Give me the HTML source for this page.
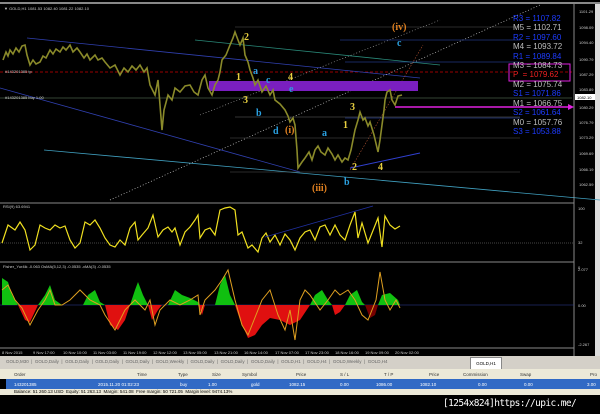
<!DOCTYPE html>
<html><head><meta charset="utf-8"><style>
body{margin:0;width:600px;height:414px;background:#000;overflow:hidden;font-family:"Liberation Sans",sans-serif;position:relative}
.a{position:absolute}
.t{font-size:4px;color:#ccc;position:absolute;white-space:nowrap}
.pv{position:absolute;left:513px;font-size:8px;white-space:nowrap}
.b{color:#1e3cff}.g{color:#bdbdbd}
.tab{position:absolute;top:359px;font-size:4.5px;color:#666;white-space:nowrap}
.h{position:absolute;top:372px;font-size:4.5px;color:#333}
.r{position:absolute;top:382px;font-size:4.5px;color:#fff}
</style></head><body>
<div class="a" style="left:0;top:2px;width:600px;height:2px;background:#888"></div>
<div class="a" style="left:595px;top:4px;width:5px;height:352px;background:#ddd"></div>
<div class="t" style="left:4px;top:6px">▼ GOLD,H1 1081.53 1082.40 1081.22 1082.10</div>
<svg class="a" style="left:0;top:0" width="600" height="414">
<line x1="0" y1="72" x2="572" y2="72" stroke="#c00" stroke-dasharray="3,2" stroke-width="0.8"/>
<line x1="0" y1="98" x2="572" y2="98" stroke="#6a8a6a" stroke-width="0.6"/>
<line x1="27" y1="38" x2="420" y2="78" stroke="#3040b0" stroke-width="0.8"/>
<line x1="0" y1="88" x2="300" y2="172" stroke="#3040b0" stroke-width="0.8"/>
<line x1="44" y1="150" x2="600" y2="200" stroke="#40a0c0" stroke-width="0.8"/>
<line x1="195" y1="40" x2="440" y2="65" stroke="#2a8a7a" stroke-width="0.8"/>
<line x1="110" y1="200" x2="540" y2="5" stroke="#ccc" stroke-dasharray="1,2" stroke-width="0.7"/>
<line x1="200" y1="115" x2="440" y2="20" stroke="#b0b0b0" stroke-dasharray="1,2" stroke-width="0.6"/>
<line x1="350" y1="170" x2="423" y2="45" stroke="#b05030" stroke-dasharray="1.5,1.5" stroke-width="0.6"/>
<line x1="340" y1="40" x2="520" y2="40" stroke="#3050c0" stroke-width="0.6"/>
<line x1="345" y1="62" x2="520" y2="62" stroke="#3050c0" stroke-width="0.6"/>
<line x1="345" y1="118" x2="520" y2="118" stroke="#3050c0" stroke-width="0.6"/>
<line x1="235" y1="117" x2="520" y2="117" stroke="#666" stroke-width="0.5"/>
<line x1="230" y1="138" x2="520" y2="138" stroke="#555" stroke-width="0.5"/>
<line x1="230" y1="172" x2="520" y2="172" stroke="#555" stroke-width="0.5"/>
<line x1="235" y1="27" x2="520" y2="27" stroke="#555" stroke-width="0.5"/>
<line x1="350" y1="168" x2="420" y2="153" stroke="#3040d0" stroke-width="1"/>
<rect x="209" y="81" width="209" height="10" fill="#7a1fc0"/>
<line x1="395" y1="107" x2="568" y2="107" stroke="#e020e0" stroke-width="1.5"/>
<polygon points="568,104 574,107 568,110" fill="#e020e0"/>
<polyline fill="none" stroke="#8a8a2a" stroke-width="1.6" stroke-linejoin="miter" points="3,60 6,52 8,56 10,50 13,54 16,48 19,52 22,46 25,45 27,55 30,65 33,60 36,64 40,62 43,56 46,58 50,50 53,54 56,49 60,52 63,47 66,50 70,45 73,52 77,48 80,52 84,58 87,54 90,60 95,55 98,60 102,58 105,62 110,68 115,65 120,75 124,68 128,72 132,66 136,70 140,65 144,72 147,68 150,85 155,95 158,80 162,130 164,110 168,95 172,100 175,88 180,92 185,86 190,85 194,92 198,95 202,80 205,75 208,88 212,95 215,85 218,80 220,72 222,60 226,55 230,45 233,38 235,32 238,40 240,45 243,38 245,55 248,62 250,70 253,78 255,85 258,80 262,92 266,86 270,95 273,90 275,100 280,104 285,110 288,116 290,122 293,118 295,125 297,150 298,168 302,162 305,158 309,152 312,160 315,150 318,146 321,152 325,155 328,148 332,154 335,160 338,155 342,162 345,158 348,160 351,150 355,130 358,120 360,112 363,120 365,118 368,126 370,122 374,135 378,152 380,140 382,125 384,110 385,100 387,92 390,90 392,100 395,105 398,96 402,95"/>
<g font-size="4" fill="#ccc">
<text x="579" y="13">1101.29</text><text x="579" y="29">1098.09</text><text x="579" y="44">1094.40</text><text x="579" y="61">1090.79</text><text x="579" y="76">1087.29</text><text x="579" y="91">1083.89</text><text x="579" y="109">1080.29</text><text x="579" y="124">1076.79</text><text x="579" y="139">1073.29</text><text x="579" y="155">1069.69</text><text x="579" y="171">1066.19</text><text x="579" y="186">1062.59</text>
<text x="5" y="73">#143201385 tp</text><text x="5" y="99">#143201385 buy 1.00</text>
</g>
<rect x="575" y="94" width="20" height="6" fill="#fff"/><text x="577" y="99" font-size="4" fill="#000">1082.10</text>
<line x1="574" y1="4" x2="574" y2="356" stroke="#aaa" stroke-width="0.8"/>
<g font-weight="bold" font-size="10" font-family="Liberation Serif,serif">
<text x="244" y="40" fill="#e8d040">2</text><text x="236" y="80" fill="#e8d040">1</text><text x="288" y="80" fill="#e8d040">4</text><text x="243" y="103" fill="#e8d040">3</text>
<text x="350" y="110" fill="#e8d040">3</text><text x="343" y="128" fill="#e8d040">1</text><text x="352" y="170" fill="#e8d040">2</text><text x="378" y="170" fill="#e8d040">4</text>
<text x="253" y="74" fill="#2aa0e0">a</text><text x="266" y="83" fill="#2aa0e0">c</text><text x="289" y="92" fill="#2aa0e0">e</text><text x="256" y="116" fill="#2aa0e0">b</text><text x="273" y="134" fill="#2aa0e0">d</text><text x="322" y="136" fill="#2aa0e0">a</text><text x="344" y="185" fill="#2aa0e0">b</text><text x="397" y="46" fill="#2aa0e0">c</text>
<text x="285" y="133" fill="#e08020">(i)</text><text x="312" y="191" fill="#e08020">(iii)</text><text x="392" y="30" fill="#e08020">(iv)</text>
</g>
<rect x="509" y="64" width="61" height="17" fill="none" stroke="#e020e0" stroke-width="1"/>
<line x1="0" y1="203" x2="574" y2="203" stroke="#888"/>
<line x1="0" y1="243" x2="574" y2="243" stroke="#444" stroke-dasharray="1,1"/>
<polyline fill="none" stroke="#f0e020" stroke-width="1.2" points="2,243 8,225 15,230 20,222 25,230 30,250 35,245 40,225 45,228 50,230 55,225 60,228 65,226 70,240 75,248 80,243 85,222 90,225 95,220 100,228 105,238 110,245 115,247 120,240 125,245 130,228 135,222 138,240 142,235 148,228 153,215 158,237 163,230 168,227 172,232 175,228 180,245 185,232 190,227 195,220 198,215 200,238 205,230 210,228 215,235 220,210 225,208 230,207 235,210 238,235 242,232 248,248 252,245 258,252 262,238 266,233 270,242 275,235 280,245 285,234 290,240 295,250 300,238 305,232 310,230 315,240 320,227 325,225 330,235 335,225 340,235 345,240 350,225 355,212 358,238 362,223 368,243 372,233 378,218 382,247 385,216 390,225 395,229 400,226"/>
<line x1="265" y1="237" x2="373" y2="206" stroke="#2030a0" stroke-width="0.8"/>
<text x="3" y="208" font-size="4" fill="#ccc">RSI(9) 63.6941</text>
<text x="578" y="210" font-size="4" fill="#ccc">100</text><text x="578" y="244" font-size="4" fill="#ccc">32</text><text x="578" y="269" font-size="4" fill="#ccc">0</text>
<line x1="0" y1="262" x2="574" y2="262" stroke="#888"/>
<line x1="0" y1="305" x2="574" y2="305" stroke="#3040a0" stroke-width="0.6"/>
<path fill="#10c010" d="M2,305 L2,278 8,282 12,295 18,305 Z M38,305 L45,295 50,285 55,300 62,305 Z M83,305 L88,295 95,290 100,302 105,305Z M130,305 L135,290 138,282 143,295 148,305Z M168,305 L175,290 182,295 190,298 198,302 200,305Z M215,305 L220,285 225,275 230,295 235,305Z M310,305 L315,295 322,290 328,300 332,305Z M345,305 L350,295 357,290 362,302 365,305Z M378,305 L382,295 390,293 398,300 400,305Z"/>
<path fill="#e01010" d="M18,305 L25,320 30,322 38,305Z M105,305 L110,325 118,330 125,320 130,305Z M148,305 L152,320 158,310 162,305Z M198,305 L202,315 205,305Z M235,305 L240,320 248,338 255,335 262,325 270,318 280,320 290,325 300,320 310,305Z M332,305 L335,315 340,312 345,305Z"/>
<path fill="#700" d="M365,305 L370,318 375,315 378,305Z"/>
<polyline fill="none" stroke="#e0a020" stroke-width="1" points="2,290 8,285 15,300 22,308 30,325 38,310 45,300 50,290 55,305 62,305 70,300 80,290 90,300 100,305 105,315 115,330 125,310 135,300 140,305 145,310 150,300 155,325 160,310 170,300 180,305 190,300 198,295 200,315 205,300 215,290 222,280 228,270 235,300 242,325 248,335 254,320 262,300 270,290 278,315 285,330 290,310 295,340 300,300 305,290 310,295 320,310 328,300 335,290 340,295 348,290 355,300 362,315 368,320 372,310 376,300 380,272 385,300 390,310 396,300 400,308"/>
<text x="3" y="268" font-size="4" fill="#ccc">Fisher_Yur4ik -0.063 OsMA(5,12,3) -0.0535 -xMA(3) -0.0535</text>
<text x="578" y="271" font-size="4" fill="#ccc">2.077</text><text x="578" y="307" font-size="4" fill="#ccc">0.00</text><text x="578" y="346" font-size="4" fill="#ccc">-2.267</text>
<line x1="0" y1="348" x2="574" y2="348" stroke="#888"/>
<g font-size="4" fill="#ccc">
<text x="2" y="354">8 Nov 2015</text><text x="33" y="354">9 Nov 17:00</text><text x="63" y="354">10 Nov 10:00</text><text x="93" y="354">11 Nov 03:00</text><text x="123" y="354">11 Nov 19:00</text><text x="153" y="354">12 Nov 12:00</text><text x="183" y="354">13 Nov 05:00</text><text x="214" y="354">13 Nov 21:00</text><text x="244" y="354">16 Nov 14:00</text><text x="275" y="354">17 Nov 07:00</text><text x="305" y="354">17 Nov 23:00</text><text x="335" y="354">18 Nov 16:00</text><text x="365" y="354">19 Nov 09:00</text><text x="395" y="354">20 Nov 02:00</text>
</g>
</svg>
<div class="a" style="left:0;top:356px;width:600px;height:13px;background:#d4d0c8"></div>
<div class="tab" style="left:6px">GOLD,M30 &nbsp;|&nbsp; GOLD,Daily &nbsp;|&nbsp; GOLD,Daily &nbsp;|&nbsp; GOLD,Daily &nbsp;|&nbsp; GOLD,Daily &nbsp;|&nbsp; GOLD,Weekly &nbsp;|&nbsp; GOLD,Daily &nbsp;|&nbsp; GOLD,Daily &nbsp;|&nbsp; GOLD,Daily &nbsp;|&nbsp; GOLD,H1 &nbsp;|&nbsp; GOLD,H4 &nbsp;|&nbsp; GOLD,Weekly &nbsp;|&nbsp; GOLD,H4</div>
<div class="a" style="left:470px;top:357px;width:30px;height:11px;background:#fff;border:1px solid #888;font-size:4.5px;color:#000;text-align:center;line-height:11px">GOLD,H1</div>
<div class="a" style="left:0;top:369px;width:600px;height:10px;background:#ece9d8"></div>
<div class="h" style="left:14px">Order</div><div class="h" style="left:137px">Time</div><div class="h" style="left:178px">Type</div><div class="h" style="left:212px">Size</div><div class="h" style="left:242px">Symbol</div><div class="h" style="left:296px">Price</div><div class="h" style="left:340px">S / L</div><div class="h" style="left:384px">T / P</div><div class="h" style="left:429px">Price</div><div class="h" style="left:463px">Commission</div><div class="h" style="left:520px">Swap</div><div class="h" style="left:590px">Pro</div>
<div class="a" style="left:6px;top:379px;width:594px;height:10px;background:#316ac5"></div>
<div class="r" style="left:14px">143201385</div><div class="r" style="left:98px">2015.11.20 01:02:23</div><div class="r" style="left:180px">buy</div><div class="r" style="left:208px">1.00</div><div class="r" style="left:251px">gold</div><div class="r" style="left:289px">1082.15</div><div class="r" style="left:340px">0.00</div><div class="r" style="left:376px">1086.00</div><div class="r" style="left:420px">1082.10</div><div class="r" style="left:478px">0.00</div><div class="r" style="left:524px">0.00</div><div class="r" style="left:587px">3.00</div>
<div class="a" style="left:0;top:389px;width:600px;height:6px;background:#ece9d8;font-size:4.5px;color:#000;line-height:6px;padding-left:14px;white-space:nowrap">Balance: 51 260.13 USD &nbsp;Equity: 51 263.13 &nbsp;Margin: 541.08 &nbsp;Free margin: 50 721.05 &nbsp;Margin level: 9474.13%</div>
<div class="a" style="left:443px;top:398px;font-size:9.5px;color:#fff;font-family:'DejaVu Sans Mono',monospace;letter-spacing:-0.6px;white-space:nowrap">[1254x824]https://upic.me/</div>
<div class="pv b" style="top:14px">R3 = 1107.82</div>
<div class="pv g" style="top:23px">M5 = 1102.71</div>
<div class="pv b" style="top:33px">R2 = 1097.60</div>
<div class="pv g" style="top:42px">M4 = 1093.72</div>
<div class="pv b" style="top:52px">R1 = 1089.84</div>
<div class="pv g" style="top:61px">M3 = 1084.73</div>
<div class="pv" style="top:70px;color:#f02020;background:#000">P &nbsp;= 1079.62</div>
<div class="pv g" style="top:80px">M2 = 1075.74</div>
<div class="pv b" style="top:89px">S1 = 1071.86</div>
<div class="pv g" style="top:99px">M1 = 1066.75</div>
<div class="pv b" style="top:108px">S2 = 1061.64</div>
<div class="pv g" style="top:118px">M0 = 1057.76</div>
<div class="pv b" style="top:127px">S3 = 1053.88</div>
</body></html>
